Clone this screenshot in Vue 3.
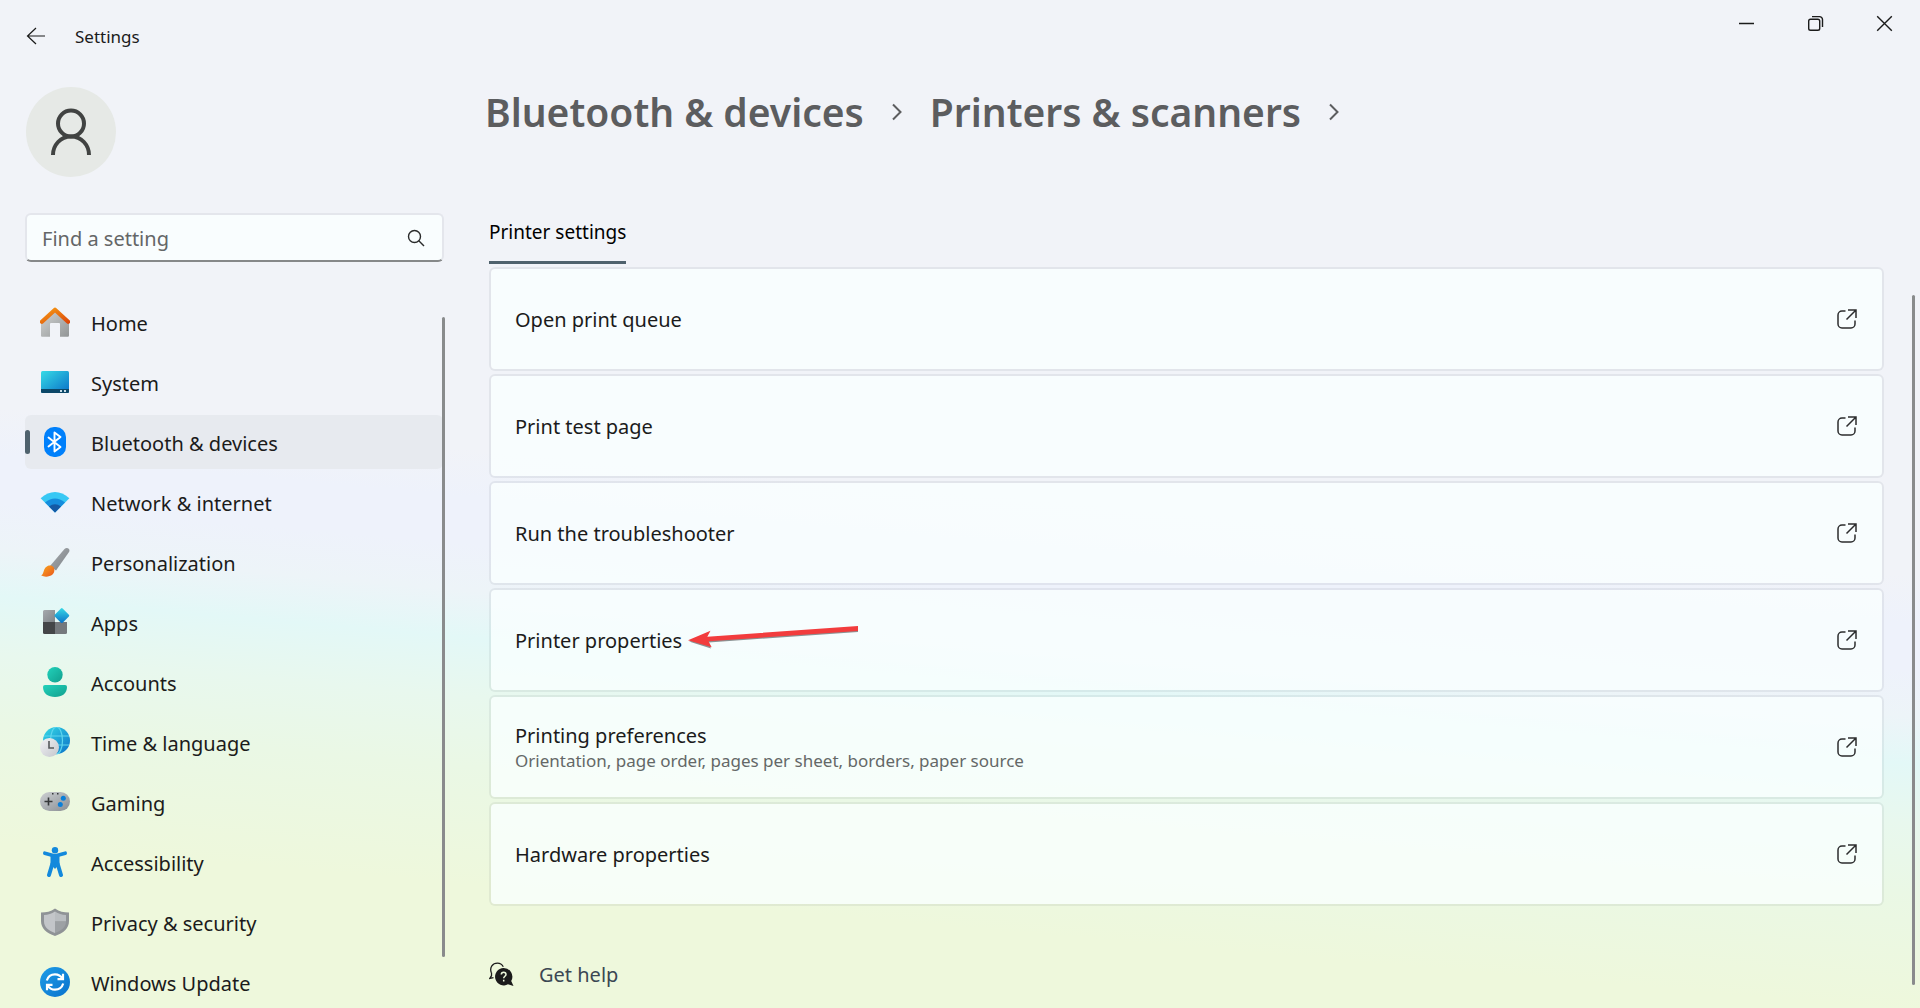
<template>
  <div class="window">
    <header class="titlebar">
      <div class="titlebar-left">
        <button class="back" type="button" aria-label="Back">
          <svg width="20" height="18" viewBox="0 0 20 18" fill="none" stroke="#1b1b1b" stroke-width="1.2">
            <path d="M19 9H1.5M10 1L1.5 9l8.500 8" />
          </svg>
        </button>
        <span class="app-name">Settings</span>
      </div>

      <div class="caption-buttons">
        <button type="button" aria-label="Minimize">
          <svg width="17" height="17" viewBox="0 0 17 17" fill="none" stroke="#1b1b1b" stroke-width="1.5">
            <path d="M1 8.500h15" />
          </svg>
        </button>
        <button type="button" aria-label="Restore">
          <svg width="17" height="17" viewBox="0 0 17 17" fill="none" stroke="#1b1b1b" stroke-width="1.4">
            <rect x="1.700" y="4.300" width="11" height="11" rx="1.800" />
            <path d="M5 1.600h7.500a3 3 0 0 1 3 3v7.400" />
          </svg>
        </button>
        <button type="button" aria-label="Close">
          <svg width="17" height="17" viewBox="0 0 17 17" fill="none" stroke="#1b1b1b" stroke-width="1.4">
            <path d="M1.200 1.200l14.600 14.600M15.800 1.200L1.200 15.800" />
          </svg>
        </button>
      </div>
    </header>

    <div class="body">
      <aside class="sidebar">
        <div class="avatar">
          <svg width="42" height="48" viewBox="0 0 42 48" fill="none" stroke="#414342" stroke-width="4">
            <circle cx="21" cy="15.500" r="13" />
            <path d="M3 47c0-10 7.500-18.500 18-18.500S39 37 39 47" />
          </svg>
        </div>

        <label class="search">
          <input v-model="query" type="text" placeholder="Find a setting" aria-label="Find a setting" />
          <svg width="18" height="18" viewBox="0 0 18 18" fill="none" stroke="#2a2b2b" stroke-width="1.400">
            <circle cx="7.500" cy="7.500" r="6" />
            <path d="M11.800 11.800L17 17" />
          </svg>
        </label>

        <nav class="nav">
          <a
            v-for="item in navItems"
            :key="item.id"
            href="#"
            class="nav-item"
            :class="{ active: item.id === current }"
            @click.prevent="current = item.id"
          >
            <svg class="nav-icon" width="30" height="30" viewBox="0 0 30 30" fill="none">
              <template v-if="item.id === 'home'">
                <path d="M1 15L15 3l14 12v13.500a1.200 1.200 0 0 1-1.200 1.200H20V17a1 1 0 0 0-1-1h-8a1 1 0 0 0-1 1v12.700H2a1 1 0 0 1-1-1z" fill="url(#gHome)" />
                <path d="M1.900 14.800L15 2.700 28.100 14.800" stroke="url(#gRoof)" stroke-width="4.200" stroke-linecap="round" stroke-linejoin="round" />
              </template>
              <template v-else-if="item.id === 'system'">
                <rect x="1" y="4" width="28" height="22" rx="1.500" fill="url(#gCyan)" />
                <path d="M1 22h28v2.500a1.500 1.500 0 0 1-1.500 1.500h-25A1.500 1.500 0 0 1 1 24.500z" fill="#0c4768" />
                <path d="M20 23h2v2h-2zM24 23h2v2h-2z" fill="#c5dbe8" />
              </template>
              <template v-else-if="item.id === 'bluetooth'">
                <rect x="4" y="0" width="22" height="30" rx="10" fill="#0080fb" />
                <path d="M8.500 10.500l12 9.500-6 4.500V5.500l6 4.500-12 9.500" stroke="#fff" stroke-width="1.900" stroke-linejoin="round" stroke-linecap="round" />
              </template>
              <template v-else-if="item.id === 'network'">
                <path d="M.6 11.200Q15-1 29.400 11.200L15 25.500z" fill="#38c8f4" />
                <path d="M5 15.500q10-8 20 0L15 25.500z" fill="#168ddd" />
                <path d="M9 19.500q6-4.500 12 0L15 25.500z" fill="#1459a4" />
              </template>
              <template v-else-if="item.id === 'personalization'">
                <path d="M10 19L24.500 2c2.500-2.700 6.300 0 4.500 3L16 23.500z" fill="url(#gGrey)" />
                <path d="M1.200 28.500C4 27 3 23.500 5.500 20.500c2.500-3 6.500-2.500 8-.5 1.500 2.200 1 5.500-1 7.500-3 2.500-8 2.800-11.300 1z" fill="url(#gBrush)" />
              </template>
              <template v-else-if="item.id === 'apps'">
                <path d="M4.500 3H15v12H3V4.500A1.500 1.500 0 0 1 4.500 3z" fill="url(#gGrey)" />
                <path d="M3 15h12v12H4.500A1.500 1.500 0 0 1 3 25.500z" fill="#444648" />
                <path d="M15 15h12v10.500a1.500 1.500 0 0 1-1.500 1.500H15z" fill="#75797d" />
                <rect x="16.200" y="3" width="11.200" height="11.200" rx="1.200" transform="rotate(45 21.800 8.600)" fill="url(#gCyan)" />
              </template>
              <template v-else-if="item.id === 'accounts'">
                <circle cx="15" cy="7.700" r="7.700" fill="url(#gTeal)" />
                <path d="M5 18h20a2 2 0 0 1 2 2c0 6.500-5 10-12 10S3 26.500 3 20a2 2 0 0 1 2-2z" fill="url(#gTeal)" />
              </template>
              <template v-else-if="item.id === 'time'">
                <circle cx="16.500" cy="13.500" r="13.500" fill="url(#gCyan)" />
                <path d="M4 9h25M4 18h25" stroke="#5fd5ee" stroke-width="1.200" />
                <ellipse cx="16.500" cy="13.500" rx="6" ry="13.500" stroke="#5fd5ee" stroke-width="1.200" />
                <circle cx="9.500" cy="20.500" r="9.500" fill="url(#gClock)" />
                <path d="M9 14v7h5" stroke="#56595c" stroke-width="1.600" />
              </template>
              <template v-else-if="item.id === 'gaming'">
                <rect x="0" y="5" width="30" height="19" rx="9.500" fill="url(#gPad)" />
                <path d="M8.500 10.500v8M4.500 14.500h8" stroke="#35383a" stroke-width="1.600" />
                <path d="M12 6h1.500v1.500H12zM17 6h1.500v1.500H17z" fill="#35383a" />
                <circle cx="23.300" cy="11.300" r="2.500" fill="#0b7fd8" />
                <circle cx="20.300" cy="17.500" r="2.500" fill="#0b7fd8" />
              </template>
              <template v-else-if="item.id === 'accessibility'">
                <circle cx="15" cy="3.200" r="3.200" fill="#1389dc" />
                <path d="M4.800 6.200L15 9l10.200-2.800" stroke="#1389dc" stroke-width="3.600" stroke-linecap="round" stroke-linejoin="round" />
                <path d="M10.500 8h9v9L15 22l-4.500-5z" fill="#1389dc" />
                <path d="M12.300 17L9 28M17.700 17L21 28" stroke="#1389dc" stroke-width="4" stroke-linecap="round" />
              </template>
              <template v-else-if="item.id === 'privacy'">
                <path d="M15 1.500c4.500 3 8.500 4 14 4V14c0 7.500-5.500 12-14 15C6.500 26 1 21.500 1 14V5.500c5.500 0 9.500-1 14-4z" fill="#8f9396" />
                <path d="M15 4.500c3.500 2.300 6.800 3.200 11 3.500v6.500H15z" fill="#b9bdc0" />
                <path d="M15 4.500C11.500 6.800 8.200 7.700 4 8v6.500c0 5.500 4.500 9 11 11.500z" fill="#c3c6c9" />
                <path d="M15 14.500h11c0 5.500-4.500 9-11 11.500z" fill="#9da1a4" />
              </template>
              <template v-else>
                <circle cx="15" cy="15" r="15" fill="url(#gUpdate)" />
                <path d="M6.800 13.500C8 9.500 11.200 7.300 15 7.300c3.200 0 5.800 1.500 7.300 4.200M23 6.800v5.400h-5.500" stroke="#fff" stroke-width="2.200" />
                <path d="M23.200 16.500C22 20.500 18.800 22.700 15 22.700c-3.200 0-5.800-1.500-7.300-4.200M7 23.200v-5.400h5.500" stroke="#fff" stroke-width="2.200" />
              </template>
            </svg>
            <span class="nav-label">{{ item.label }}</span>
          </a>
          <div class="scroll-thumb nav-thumb"></div>
        </nav>
      </aside>

      <main class="content">
        <h1 class="breadcrumb">
          <template v-for="crumb in crumbs" :key="crumb">
            <a href="#">{{ crumb }}</a>
            <svg width="12" height="18" viewBox="0 0 12 18" fill="none" stroke="#5c5d5f" stroke-width="2">
              <path d="M2 1.500L9.500 9 2 16.500" />
            </svg>
          </template>
        </h1>

        <div class="panel">
          <button class="tab" type="button">Printer settings</button>

          <div class="cards">
            <button v-for="card in cards" :key="card.title" class="card" type="button">
              <span class="card-text">
                <span class="card-title">{{ card.title }}</span>
                <span v-if="card.note" class="card-note">{{ card.note }}</span>
              </span>
              <svg v-if="card.pointed" class="pointer" width="170" height="32" viewBox="0 0 170 32">
                <path d="M1 17.500L23 24.500 20.500 18.500 170 8V4L20 14z" fill="#5c6465" opacity=".7" />
                <path d="M0 16.300L22.500 6.700l-3.200 6L170 2v5L20.500 17.200l3.200 6z" fill="#f23c3d" />
              </svg>
              <svg class="open-icon" width="20" height="20" viewBox="0 0 20 20" fill="none" stroke="#2c2d2e" stroke-width="1.500">
                <path d="M8.500 2H5a4 4 0 0 0-4 4v9a4 4 0 0 0 4 4h9a4 4 0 0 0 4-4v-3.500" />
                <path d="M11 1h8v8M19 1l-9.500 9.500" />
              </svg>
            </button>
          </div>

          <div class="help">
            <svg width="25" height="25" viewBox="0 0 25 25">
              <path d="M14.300 4.800C13 2.500 11 1.200 8.500 1.200c-5 0-8 4-6.300 9.300M2.500 10.500v3.200L.8 16.500l3.700-.8" fill="none" stroke="#1b1b1b" stroke-width="1.300" />
              <path d="M14.500 6a8.700 8.700 0 1 0 4.500 16.300L24.500 24l-2.300-5A8.700 8.700 0 0 0 14.500 6z" fill="#1b1b1b" />
              <path d="M12.300 12.500c0-3 4.700-3 4.700 0 0 1.800-2.300 1.800-2.300 3.800M14.700 17.800v1.700" fill="none" stroke="#eef8dd" stroke-width="1.500" />
            </svg>
            <a href="#">Get help</a>
          </div>
        </div>

        <div class="scroll-thumb page-thumb"></div>
      </main>
    </div>

    <!-- shared icon gradients -->
    <svg class="defs" width="0" height="0" aria-hidden="true">
      <defs>
        <linearGradient id="gHome" x1="0" y1="0" x2="1" y2="1">
          <stop offset="0" stop-color="#d3d5d5" />
          <stop offset="1" stop-color="#929596" />
        </linearGradient>
        <linearGradient id="gRoof" x1="0" y1="0" x2="1" y2="1">
          <stop offset="0" stop-color="#f69a14" />
          <stop offset="1" stop-color="#dd4a0c" />
        </linearGradient>
        <linearGradient id="gCyan" x1="0" y1="0" x2="1" y2="1">
          <stop offset="0" stop-color="#36dbe6" />
          <stop offset="1" stop-color="#0a70c8" />
        </linearGradient>
        <linearGradient id="gGrey" x1="0" y1="0" x2="1" y2="1">
          <stop offset="0" stop-color="#a5a9ad" />
          <stop offset="1" stop-color="#7f8488" />
        </linearGradient>
        <linearGradient id="gBrush" x1="0" y1="0" x2="1" y2="1">
          <stop offset="0" stop-color="#fba91f" />
          <stop offset="1" stop-color="#e8561c" />
        </linearGradient>
        <linearGradient id="gTeal" x1="0" y1="0" x2="1" y2="1">
          <stop offset="0" stop-color="#22d2bb" />
          <stop offset="1" stop-color="#119f8d" />
        </linearGradient>
        <linearGradient id="gClock" x1="0" y1="0" x2="1" y2="1">
          <stop offset="0" stop-color="#f3f3f5" />
          <stop offset="1" stop-color="#c3c6cc" />
        </linearGradient>
        <linearGradient id="gPad" x1="0" y1="0" x2="1" y2="1">
          <stop offset="0" stop-color="#cdd0d3" />
          <stop offset="1" stop-color="#888d92" />
        </linearGradient>
        <linearGradient id="gUpdate" x1="0" y1="0" x2="1" y2="1">
          <stop offset="0" stop-color="#1f9ce6" />
          <stop offset="1" stop-color="#0872cd" />
        </linearGradient>
      </defs>
    </svg>
  </div>
</template>

<script setup>
import { ref } from 'vue'

const query = ref('')
const current = ref('bluetooth')

const navItems = [
  { id: 'home',            label: 'Home' },
  { id: 'system',          label: 'System' },
  { id: 'bluetooth',       label: 'Bluetooth & devices' },
  { id: 'network',         label: 'Network & internet' },
  { id: 'personalization', label: 'Personalization' },
  { id: 'apps',            label: 'Apps' },
  { id: 'accounts',        label: 'Accounts' },
  { id: 'time',            label: 'Time & language' },
  { id: 'gaming',          label: 'Gaming' },
  { id: 'accessibility',   label: 'Accessibility' },
  { id: 'privacy',         label: 'Privacy & security' },
  { id: 'update',          label: 'Windows Update' },
]

const crumbs = ['Bluetooth & devices', 'Printers & scanners']

const cards = [
  { title: 'Open print queue' },
  { title: 'Print test page' },
  { title: 'Run the troubleshooter' },
  { title: 'Printer properties', pointed: true },
  { title: 'Printing preferences', note: 'Orientation, page order, pages per sheet, borders, paper source' },
  { title: 'Hardware properties' },
]
</script>

<style>
body {
  margin: 0;
}
</style>

<style scoped>
.window {
  height: 100vh;
  display: flex;
  flex-direction: column;
  overflow: hidden;
  position: relative;
  font-family: "Noto Sans", "Open Sans", sans-serif;
  font-size: 20px;
  color: #1b1b1b;
  background: linear-gradient(
    185deg,
    #f1f3f8 0%,
    #f1f3f8 49%,
    #eef2fb 53%,
    #eef2fb 57%,
    #edf4f8 61%,
    #e3f8f7 65%,
    #e8f8ee 70%,
    #eaf8e5 76%,
    #eef8dc 86%,
    #eef8dc 100%
  );
}

button {
  font: inherit;
  color: inherit;
  background: none;
  border: 0;
  padding: 0;
}

a {
  color: inherit;
  text-decoration: none;
}

svg { display: block; flex-shrink: 0; }

.defs { position: absolute; }

/* ── title bar ── */
.titlebar {
  height: 72px;
  flex-shrink: 0;
  display: flex;
  justify-content: space-between;
  align-items: flex-start;
}

.titlebar-left {
  height: 72px;
  padding-left: 26px;
  display: flex;
  align-items: center;
  gap: 29px;
}

.app-name { font-size: 17px; }

.caption-buttons {
  display: flex;
  padding-right: 1px;
}

.caption-buttons button {
  width: 69px;
  height: 47px;
  display: flex;
  align-items: center;
  justify-content: center;
}

.body {
  flex: 1;
  min-height: 0;
  display: grid;
  grid-template-columns: 445px 1fr;
}

/* ── sidebar ── */
.sidebar {
  min-height: 0;
  padding: 15px 0 0 25px;
  display: flex;
  flex-direction: column;
}

.avatar {
  width: 90px;
  height: 90px;
  margin-left: 1px;
  flex-shrink: 0;
  border-radius: 50%;
  background: #e6e9e6;
  display: flex;
  align-items: center;
  justify-content: center;
}

.search {
  height: 49px;
  box-sizing: border-box;
  flex-shrink: 0;
  margin: 36px 1px 0 0;
  padding: 0 17px 0 15px;
  display: flex;
  align-items: center;
  border: 2px solid #e4e6ec;
  border-bottom-color: #868889;
  border-radius: 6px;
  background: #f9fdfe;
}

.search input {
  flex: 1;
  min-width: 0;
  border: 0;
  padding: 2px 0 0;
  outline: none;
  background: none;
  font: inherit;
}

.search input::placeholder {
  color: #646667;
  opacity: 1;
}

.nav {
  flex: 1;
  min-height: 0;
  margin-top: 33px;
  position: relative;
  overflow: hidden;
  display: flex;
  flex-direction: column;
  gap: 6px;
}

.nav-item {
  height: 54px;
  flex-shrink: 0;
  margin-right: 2px;
  padding-left: 15px;
  position: relative;
  display: flex;
  align-items: center;
  gap: 21px;
  border-radius: 6px;
}

.nav-item.active { background: #e7eaef; }

.nav-item.active::before {
  content: "";
  position: absolute;
  left: 0;
  top: 15px;
  width: 5px;
  height: 24px;
  border-radius: 3px;
  background: #4f626d;
}

.nav-label { padding-top: 2px; }

.scroll-thumb {
  position: absolute;
  width: 3px;
  border-radius: 2px;
  background: #898b8c;
}

.nav-thumb {
  right: 0;
  top: 22px;
  bottom: 51px;
}

/* ── content ── */
.content {
  min-height: 0;
  padding: 12px 36px 0 40px;
  position: relative;
}

.breadcrumb {
  margin: 0;
  height: 56px;
  display: flex;
  align-items: center;
  gap: 27px;
  font-size: 39px;
  font-weight: 600;
  line-height: 56px;
  color: #5c5d5f;
}

.panel { padding: 74px 0 0 4px; }

.tab {
  display: block;
  padding-bottom: 11px;
  border-bottom: 3px solid #4f626d;
  font-size: 19px;
  line-height: 36px;
  color: #000;
}

.cards {
  margin-top: 3px;
  display: flex;
  flex-direction: column;
  gap: 3px;
}

.card {
  height: 104px;
  box-sizing: border-box;
  padding: 0 25px 0 24px;
  display: flex;
  align-items: center;
  text-align: left;
  border: 2px solid rgba(0, 20, 40, 0.06);
  border-radius: 6px;
  background: rgba(250, 255, 255, 0.78);
  background-clip: padding-box;
}

.card-text {
  display: flex;
  flex-direction: column;
  padding-top: 2px;
}

.card-title { line-height: 26px; }

.card-note {
  font-size: 17px;
  line-height: 24px;
  color: #646867;
}

.pointer { margin-left: 6px; }

.open-icon { margin-left: auto; }

.help {
  margin-top: 50px;
  height: 36px;
  display: flex;
  align-items: center;
  gap: 25px;
  color: #3b4753;
}

.page-thumb {
  right: 5px;
  top: 223px;
  bottom: 23px;
}
</style>
